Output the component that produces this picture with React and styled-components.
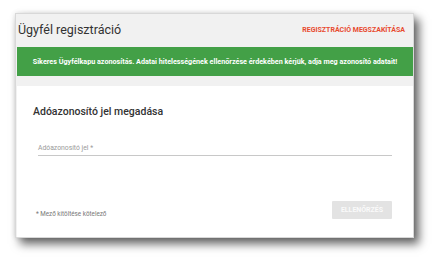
import React from 'react';
import styled, { createGlobalStyle } from 'styled-components';

const GlobalStyle = createGlobalStyle`
  body {
    margin: 0;
    background: #ffffff;
    font-family: 'Roboto', 'Liberation Sans', sans-serif;
  }
`;

const App = () => {
    return (
        <>
            <GlobalStyle />
            <Page>
                <Window>
                    <Header>
                        <Title>Ügyfél regisztráció</Title>
                        <CancelLink>REGISZTRÁCIÓ MEGSZAKÍTÁSA</CancelLink>
                    </Header>
                    <Banner>
                        Sikeres Ügyfélkapu azonosítás. Adatai hitelességének ellenőrzése érdekében kérjük, adja meg azonosító adatait!
                    </Banner>
                    <Card>
                        <CardTitle>Adóazonosító jel megadása</CardTitle>
                        <Field>
                            <FieldLabel>Adóazonosító jel *</FieldLabel>
                        </Field>
                        <Footer>
                            <Hint>* Mező kitöltése kötelező</Hint>
                            <CheckButton disabled>ELLENŐRZÉS</CheckButton>
                        </Footer>
                    </Card>
                </Window>
            </Page>
        </>
    );
};

export default App;

const Page = styled.div`
  width: 441px;
  height: 269px;
  padding: 13px 0 0 15px;
  box-sizing: border-box;
`;

const Window = styled.div`
  width: 399px;
  height: 225px;
  display: flex;
  flex-direction: column;
  background-color: #f1f1f1;
  border: 1px solid #d8d8d8;
  box-sizing: border-box;
  padding: 0 0 0 1px;
  box-shadow: 5px 6px 9px rgba(0, 0, 0, 0.6), 0 0 5px rgba(0, 0, 0, 0.12);
`;

const Header = styled.div`
  display: flex;
  justify-content: space-between;
  align-items: center;
  height: 32px;
  padding: 0 8px 0 1px;
  box-sizing: border-box;
`;

const Title = styled.h1`
  margin: 0;
  font-size: 12.5px;
  font-weight: 400;
  color: #333333;
  padding-bottom: 2px;
`;

const CancelLink = styled.span`
  font-size: 7px;
  font-weight: 700;
  color: #e84a2f;
`;

const Banner = styled.div`
  height: 29px;
  margin-top: 1px;
  display: flex;
  align-items: center;
  justify-content: center;
  background-color: #43a047;
  color: #ffffff;
  font-size: 7.2px;
  font-weight: 700;
  white-space: nowrap;
`;

const Card = styled.div`
  flex: 1;
  margin-top: 10px;
  background-color: #ffffff;
  display: flex;
  flex-direction: column;
  padding: 19px 21px 0 16px;
`;

const CardTitle = styled.h2`
  margin: 0;
  font-size: 10.5px;
  font-weight: 500;
  color: #333333;
`;

const Field = styled.div`
  margin: 17px 0 0 5px;
  padding-bottom: 1px;
  border-bottom: 1px solid #c8c8c8;
`;

const FieldLabel = styled.span`
  font-size: 6.8px;
  color: #9a9a9a;
`;

const Footer = styled.div`
  display: flex;
  justify-content: space-between;
  align-items: flex-end;
  margin-top: 45px;
  padding-left: 3px;
`;

const Hint = styled.span`
  font-size: 6.3px;
  color: #777777;
  margin-bottom: 1px;
`;

const CheckButton = styled.button`
  width: 60px;
  height: 18px;
  border: none;
  border-radius: 1px;
  background-color: #e3e3e3;
  color: #fafafa;
  font-family: 'Roboto', 'Liberation Sans', sans-serif;
  font-size: 7px;
  font-weight: 700;
  padding: 0;
`;
